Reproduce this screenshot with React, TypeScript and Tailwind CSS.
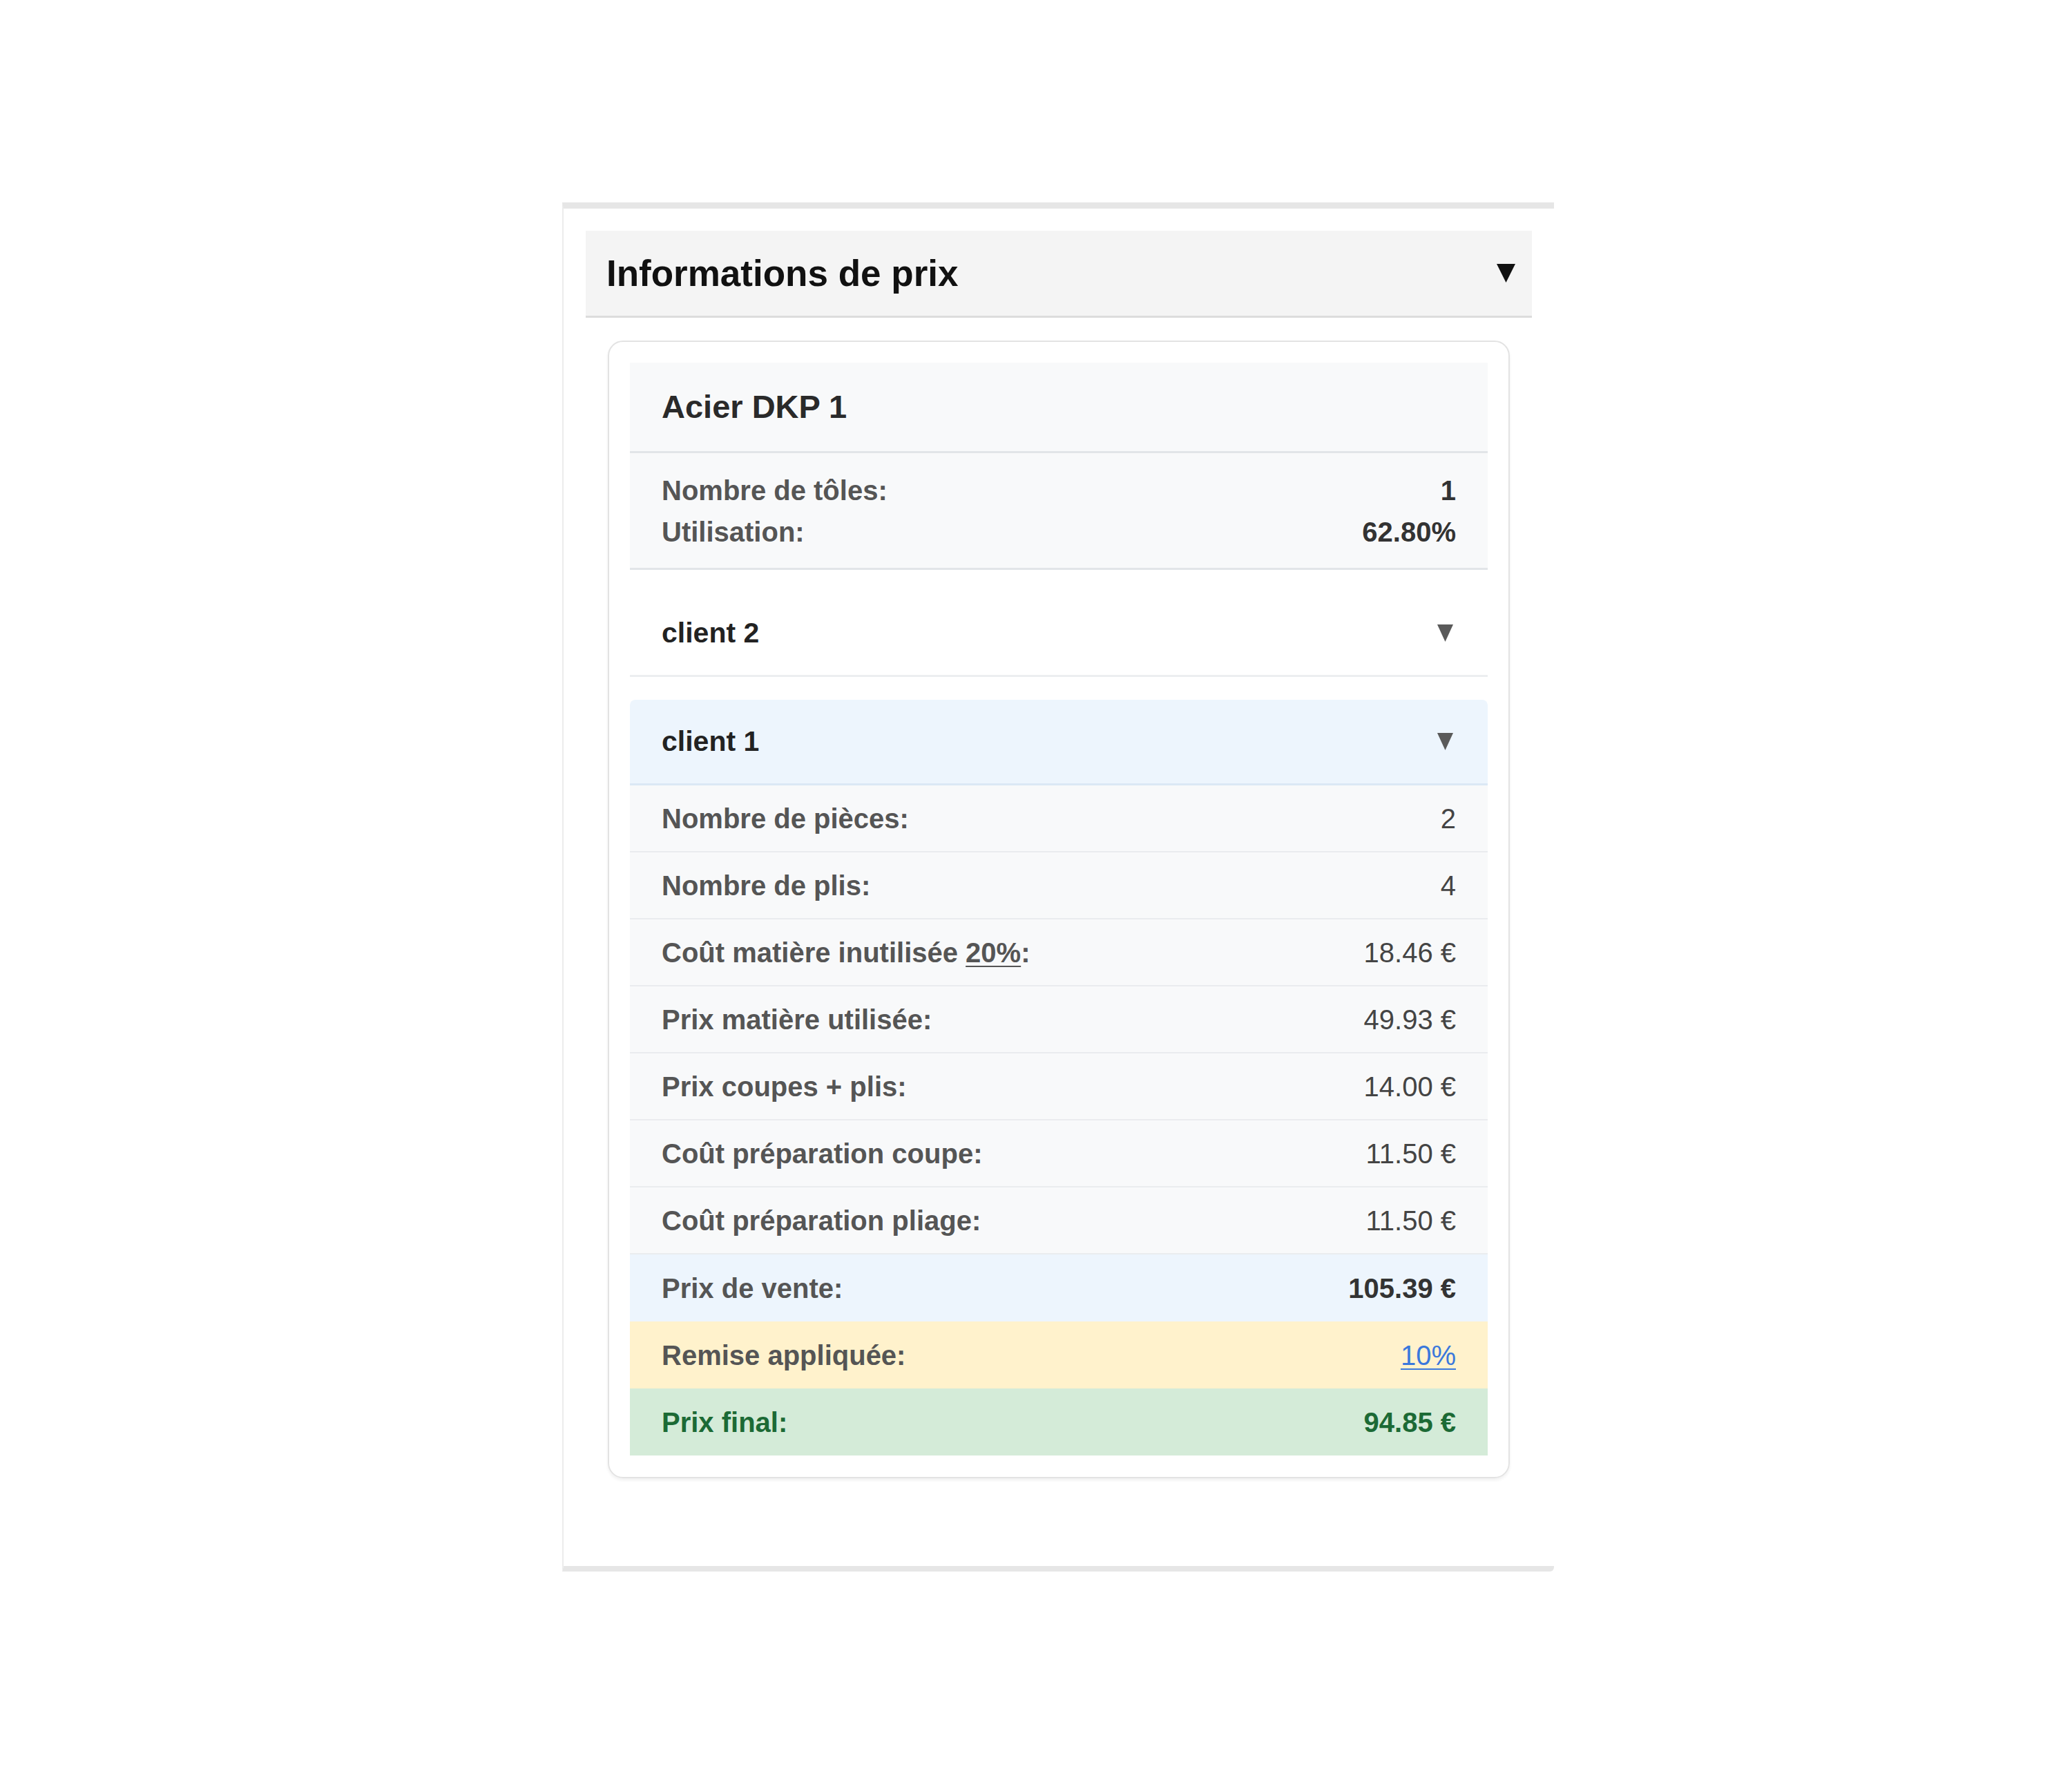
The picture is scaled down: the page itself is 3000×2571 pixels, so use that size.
const font = { fontFamily: '"Liberation Sans", Arial, Helvetica, sans-serif' }

type Row = {
  label: React.ReactNode
  value: React.ReactNode
  tone?: 'plain' | 'blue' | 'yellow' | 'green'
}

function Caret({ size, color }: { size: [number, number]; color: string }): React.JSX.Element {
  const [w, h] = size
  return (
    <svg width={w} height={h} viewBox={`0 0 ${w} ${h}`} className="shrink-0">
      <polygon points={`0,0 ${w},0 ${w / 2},${h}`} fill={color} />
    </svg>
  )
}

const rows: Row[] = [
  { label: 'Nombre de pièces:', value: '2' },
  { label: 'Nombre de plis:', value: '4' },
  {
    label: (
      <>
        Coût matière inutilisée <span className="underline underline-offset-[5px] decoration-2">20%</span>:
      </>
    ),
    value: '18.46 €',
  },
  { label: 'Prix matière utilisée:', value: '49.93 €' },
  { label: 'Prix coupes + plis:', value: '14.00 €' },
  { label: 'Coût préparation coupe:', value: '11.50 €' },
  { label: 'Coût préparation pliage:', value: '11.50 €' },
  { label: 'Prix de vente:', value: '105.39 €', tone: 'blue' },
  { label: 'Remise appliquée:', value: '10%', tone: 'yellow' },
  { label: 'Prix final:', value: '94.85 €', tone: 'green' },
]

function PriceRow({ row, last }: { row: Row; last: boolean }): React.JSX.Element {
  const tone = row.tone ?? 'plain'
  const bg =
    tone === 'blue'
      ? 'bg-[#edf5fd]'
      : tone === 'yellow'
        ? 'bg-[#fff2cc]'
        : tone === 'green'
          ? 'bg-[#d4ebd8]'
          : 'bg-[#f8f9fa]'
  const border = tone === 'plain' && !last ? 'border-b-2 border-[#eaecef]' : ''
  const labelColor = tone === 'green' ? 'text-[#1c6a35]' : 'text-[#555555]'

  let value: React.ReactNode
  if (tone === 'yellow') {
    value = (
      <span className="text-[#3a78dc] underline underline-offset-[5px] decoration-2 font-normal">{row.value}</span>
    )
  } else if (tone === 'green') {
    value = <span className="text-[#1c6a35] font-bold">{row.value}</span>
  } else if (tone === 'blue') {
    value = <span className="text-[#333333] font-bold">{row.value}</span>
  } else {
    value = <span className="text-[#444444] font-normal">{row.value}</span>
  }

  return (
    <div className={`h-[97px] flex items-center justify-between px-[46px] ${bg} ${border}`}>
      <span className={`text-[40px] font-bold ${labelColor}`}>{row.label}</span>
      <span className="text-[40px]">{value}</span>
    </div>
  )
}

export default function App(): React.JSX.Element {
  return (
    <div className="min-h-[2571px] w-[3000px] bg-white pt-[293px] pl-[814px]" style={font}>
      <div className="w-[1436px] border-t-[9px] border-t-[#e6e6e6] border-l-2 border-l-[#ececec] border-b-[8px] border-b-[#e6e6e6] rounded-br-[6px] px-[32px] pt-[32px] pb-[127px]">
        {/* Panel header */}
        <div className="h-[126px] bg-[#f4f4f4] border-b-[3px] border-[#dcdcdc] flex items-center justify-between pl-[30px] pr-[24px]">
          <span className="text-[53px] font-bold text-[#111111]">Informations de prix</span>
          <Caret size={[27, 27]} color="#111111" />
        </div>

        {/* Material card */}
        <div className="mt-[33px] mx-[32px] border-2 border-[#e3e3e3] rounded-[22px] px-[30px] pt-[30px] pb-[31px] shadow-[0_3px_4px_rgba(0,0,0,0.06)]">
          <div className="h-[131px] bg-[#f8f9fa] border-b-[3px] border-[#e2e5e8] flex items-center px-[46px]">
            <span className="text-[47px] font-bold text-[#2a2a2a]">Acier DKP 1</span>
          </div>

          <div className="bg-[#f8f9fa] border-b-[3px] border-[#e2e5e8] px-[46px] pt-[24px] pb-[22px] text-[40px] leading-[60px]">
            <div className="flex justify-between">
              <span className="font-bold text-[#555555]">Nombre de tôles:</span>
              <span className="font-bold text-[#333333]">1</span>
            </div>
            <div className="flex justify-between">
              <span className="font-bold text-[#555555]">Utilisation:</span>
              <span className="font-bold text-[#333333]">62.80%</span>
            </div>
          </div>

          {/* client 2 (collapsed) */}
          <div className="pt-[31px]">
            <div className="h-[124px] bg-white border-b-[3px] border-[#eceef0] flex items-center justify-between px-[46px] pr-[50px]">
              <span className="text-[41px] font-bold text-[#222222]">client 2</span>
              <Caret size={[23, 25]} color="#5a5a5a" />
            </div>
          </div>

          {/* client 1 (expanded) */}
          <div className="mt-[33px]">
            <div className="h-[124px] bg-[#edf5fd] rounded-t-[8px] border-b-[3px] border-[#dbe8f5] flex items-center justify-between px-[46px] pr-[50px]">
              <span className="text-[41px] font-bold text-[#222222]">client 1</span>
              <Caret size={[23, 25]} color="#5a5a5a" />
            </div>
            {rows.map((r, i) => (
              <PriceRow key={i} row={r} last={i === rows.length - 1} />
            ))}
          </div>
        </div>
      </div>
    </div>
  )
}
